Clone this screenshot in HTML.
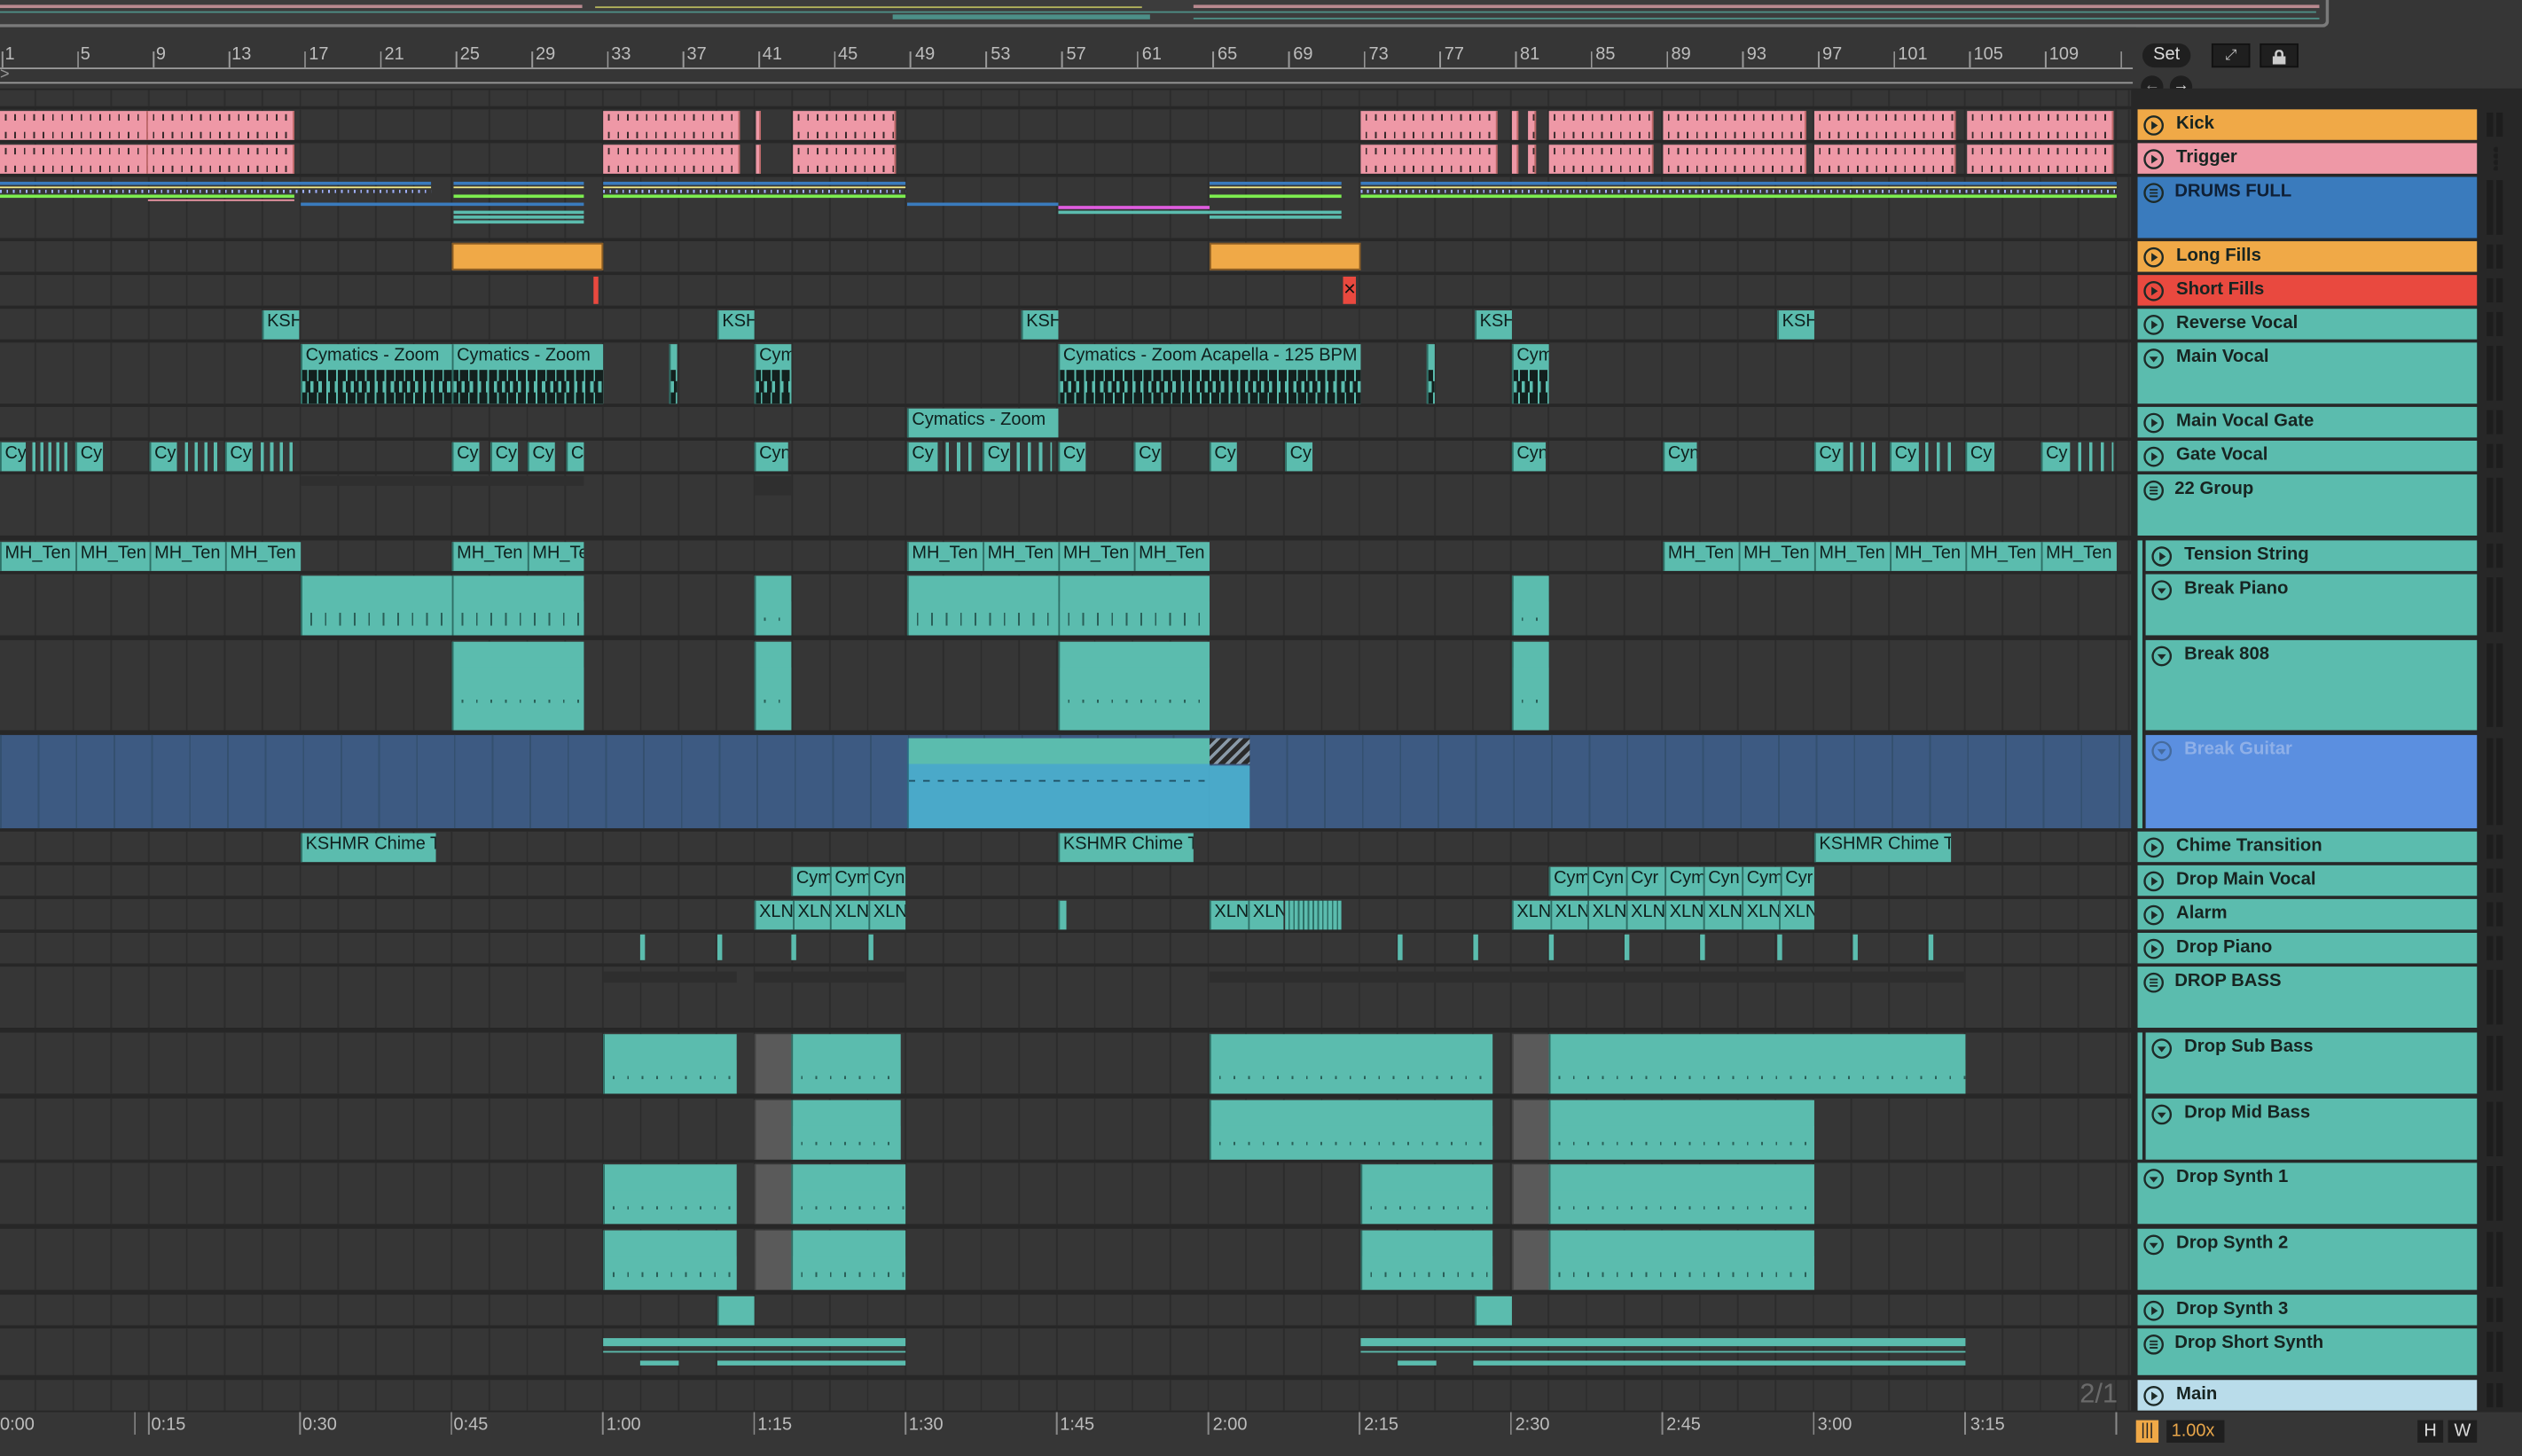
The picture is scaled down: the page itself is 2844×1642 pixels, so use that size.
<!DOCTYPE html>
<html><head><meta charset="utf-8"><style>
html,body{margin:0;padding:0;background:#363636;overflow:hidden}
body{width:2844px;height:1642px;position:relative}
#w{position:absolute;left:0;top:0;width:1568px;height:905.3px;transform:scale(1.81378);transform-origin:0 0;font-family:"Liberation Sans",sans-serif;background:#363636;overflow:hidden}
.a{position:absolute}
.row{position:absolute;left:0;width:1325px;background:#363636 repeating-linear-gradient(90deg,#2c2c2c 0 1px,transparent 1px 23.52px);background-position:-2px 0}
.c{position:absolute;background:#5bbcae;box-sizing:border-box;border-left:1px solid #2e6f66;overflow:hidden;white-space:nowrap;font-size:11px;color:#0f1f1d;line-height:15px;padding-left:2px}
.pk{position:absolute;background:#ee98a6;background-image:repeating-linear-gradient(90deg,#3a2a2c 0 1px,transparent 1px 5.88px),repeating-linear-gradient(90deg,#3a2a2c 0 1px,transparent 1px 5.88px);background-size:100% 4px,100% 4px;background-position:3px 2px,3px 13px;background-repeat:no-repeat;box-sizing:border-box;border-right:1px solid #b66}
.wv{position:absolute;left:0;right:0;top:16px;bottom:0;background:repeating-linear-gradient(90deg,#13201e 0 3px,#5bbcae 3px 4px,#13201e 4px 6px);}
.wv:after{content:"";position:absolute;left:0;right:0;top:35%;height:30%;background:repeating-linear-gradient(90deg,#5bbcae 0 2px,#13201e 2px 5px)}
.md{position:absolute;left:0;right:0;top:16px;bottom:0;background:#5bbcae repeating-linear-gradient(90deg,transparent 0 5px,#2a5f58 5px 6px,transparent 6px 9px);background-size:100% 2px;background-repeat:no-repeat;background-position:0 55%}
.h{position:absolute;left:1329px;width:211px;box-sizing:border-box;font-size:11.2px;font-weight:bold;color:#172421;padding-left:24px;line-height:19px}
.h svg{position:absolute;left:3px;top:3px}
.m{position:absolute;left:1546px;width:10px;background:linear-gradient(90deg,#1d1d1d 0 4px,transparent 4px 6px,#1d1d1d 6px 10px)}
.t{font-size:11px;color:#bdbdbd;position:absolute;top:28px}
.bt{font-size:11px;color:#bdbdbd;position:absolute;top:880px}
.ln{position:absolute;height:2px}
.gy{position:absolute;background:#5a5a5a;box-sizing:border-box;border-left:1px solid #444}
</style></head><body><div id="w">
<div class="a" style="left:0;top:0;width:1446px;height:15px;background:#3c3c3c;border-bottom:2px solid #7a7a7a;border-right:2px solid #7a7a7a;border-radius:0 0 4px 0"></div>
<div class="a" style="left:0;top:3px;width:362px;height:2px;background:#b9898f"></div>
<div class="a" style="left:0;top:7px;width:1440px;height:1px;background:#4f8f87"></div>
<div class="a" style="left:370px;top:4px;width:340px;height:1px;background:#b5b55c"></div>
<div class="a" style="left:555px;top:9px;width:160px;height:3px;background:#4c8f88"></div>
<div class="a" style="left:742px;top:3px;width:700px;height:2px;background:#b9898f"></div>
<div class="a" style="left:742px;top:11px;width:700px;height:1px;background:#4f8f87"></div>
<div class="a" style="left:0;top:17px;width:1328px;height:38px;background:#363636"></div>
<div class="a" style="left:0;top:42px;width:1326px;height:1px;background:#9a9a9a"></div>
<div class="a" style="left:0;top:51px;width:1326px;height:1px;background:#9a9a9a"></div>
<div class="a" style="left:0;top:43px;color:#999;font-size:10px;line-height:8px">&gt;</div>
<div class="a" style="left:0;top:32px;width:1326px;height:10px;background:repeating-linear-gradient(90deg,#999 0 1px,transparent 1px 47.05px);background-position:1px 0"></div>
<div class="t" style="left:3px">1</div><div class="t" style="left:50px">5</div><div class="t" style="left:97px">9</div><div class="t" style="left:144px">13</div><div class="t" style="left:192px">17</div><div class="t" style="left:239px">21</div><div class="t" style="left:286px">25</div><div class="t" style="left:333px">29</div><div class="t" style="left:380px">33</div><div class="t" style="left:427px">37</div><div class="t" style="left:474px">41</div><div class="t" style="left:521px">45</div><div class="t" style="left:569px">49</div><div class="t" style="left:616px">53</div><div class="t" style="left:663px">57</div><div class="t" style="left:710px">61</div><div class="t" style="left:757px">65</div><div class="t" style="left:804px">69</div><div class="t" style="left:851px">73</div><div class="t" style="left:898px">77</div><div class="t" style="left:945px">81</div><div class="t" style="left:992px">85</div><div class="t" style="left:1039px">89</div><div class="t" style="left:1086px">93</div><div class="t" style="left:1133px">97</div><div class="t" style="left:1180px">101</div><div class="t" style="left:1227px">105</div><div class="t" style="left:1274px">109</div>
<div class="a" style="left:1332px;top:27px;width:30px;height:15px;border-radius:8px;background:#1f1f1f;color:#ddd;font-size:11px;text-align:center;line-height:15px">Set</div>
<div class="a" style="left:1375px;top:27px;width:22px;height:13px;background:#1f1f1f;border:1px solid #111;color:#ccc;font-size:9px;text-align:center;line-height:13px">⤢</div>
<div class="a" style="left:1405px;top:27px;width:22px;height:13px;background:#1f1f1f;border:1px solid #111;text-align:center"><svg width="10" height="10" viewBox="0 0 10 10" style="margin-top:2px"><rect x="1" y="4" width="8" height="5" fill="#ccc"/><path d="M3 4V2.5a2 2 0 0 1 4 0V4" stroke="#ccc" fill="none" stroke-width="1.4"/></svg></div>
<div class="a" style="left:1331px;top:47px;width:14px;height:14px;border-radius:7px;background:#1f1f1f;color:#888;font-size:10px;text-align:center;line-height:14px">←</div>
<div class="a" style="left:1349px;top:47px;width:14px;height:14px;border-radius:7px;background:#1f1f1f;color:#ddd;font-size:10px;text-align:center;line-height:14px">→</div>
<div class="a" style="left:1325px;top:55px;width:4px;height:823px;background:#2a2a2a"></div>
<div class="a" style="left:0;top:55px;width:1568px;height:823px;background:#272727"></div>

<div class="row" style="top:56px;height:10px"></div>
<div class="row" style="top:68px;height:19px"></div>
<div class="row" style="top:89px;height:19px"></div>
<div class="row" style="top:110px;height:38px"></div>
<div class="row" style="top:150px;height:19px"></div>
<div class="row" style="top:171px;height:19px"></div>
<div class="row" style="top:192px;height:19px"></div>
<div class="row" style="top:213px;height:38px"></div>
<div class="row" style="top:253px;height:19px"></div>
<div class="row" style="top:274px;height:19px"></div>
<div class="row" style="top:295px;height:38px"></div>
<div class="row" style="top:336px;height:19px"></div>
<div class="row" style="top:357px;height:38px"></div>
<div class="row" style="top:398px;height:56px"></div>
<div class="a" style="top:457px;left:0;width:1325px;height:58px;background:#3d5a82 repeating-linear-gradient(90deg,#34506f 0 1px,transparent 1px 23.52px)"></div>
<div class="row" style="top:517px;height:19px"></div>
<div class="row" style="top:538px;height:19px"></div>
<div class="row" style="top:559px;height:19px"></div>
<div class="row" style="top:580px;height:19px"></div>
<div class="row" style="top:601px;height:38px"></div>
<div class="row" style="top:642px;height:38px"></div>
<div class="row" style="top:683px;height:38px"></div>
<div class="row" style="top:723px;height:38px"></div>
<div class="row" style="top:764px;height:38px"></div>
<div class="row" style="top:805px;height:19px"></div>
<div class="row" style="top:826px;height:29px"></div>
<div class="row" style="top:858px;height:19px"></div>

<div class="pk" style="left:0;top:69px;width:92px;height:18px"></div><div class="pk" style="left:92px;top:69px;width:91px;height:18px"></div>
<div class="pk" style="left:375px;top:69px;width:85px;height:18px"></div><div class="pk" style="left:470px;top:69px;width:3px;height:18px"></div><div class="pk" style="left:493px;top:69px;width:64px;height:18px"></div>
<div class="pk" style="left:846px;top:69px;width:85px;height:18px"></div><div class="pk" style="left:940px;top:69px;width:4px;height:18px"></div><div class="pk" style="left:950px;top:69px;width:5px;height:18px"></div><div class="pk" style="left:963px;top:69px;width:65px;height:18px"></div><div class="pk" style="left:1034px;top:69px;width:89px;height:18px"></div><div class="pk" style="left:1128px;top:69px;width:88px;height:18px"></div><div class="pk" style="left:1223px;top:69px;width:91px;height:18px"></div>
<div class="pk" style="left:0;top:90px;width:92px;height:18px"></div><div class="pk" style="left:92px;top:90px;width:91px;height:18px"></div>
<div class="pk" style="left:375px;top:90px;width:85px;height:18px"></div><div class="pk" style="left:470px;top:90px;width:3px;height:18px"></div><div class="pk" style="left:493px;top:90px;width:64px;height:18px"></div>
<div class="pk" style="left:846px;top:90px;width:85px;height:18px"></div><div class="pk" style="left:940px;top:90px;width:4px;height:18px"></div><div class="pk" style="left:950px;top:90px;width:5px;height:18px"></div><div class="pk" style="left:963px;top:90px;width:65px;height:18px"></div><div class="pk" style="left:1034px;top:90px;width:89px;height:18px"></div><div class="pk" style="left:1128px;top:90px;width:88px;height:18px"></div><div class="pk" style="left:1223px;top:90px;width:91px;height:18px"></div>

<div class="ln" style="left:0;top:113px;width:268px;background:#3a7bbd"></div><div class="ln" style="left:282px;top:113px;width:81px;background:#3a7bbd"></div><div class="ln" style="left:375px;top:113px;width:188px;background:#3a7bbd"></div><div class="ln" style="left:752px;top:113px;width:82px;background:#3a7bbd"></div><div class="ln" style="left:846px;top:113px;width:470px;background:#3a7bbd"></div>
<div class="ln" style="left:0;top:116px;width:268px;height:1px;background:#efe98a"></div><div class="ln" style="left:282px;top:116px;width:81px;height:1px;background:#efe98a"></div><div class="ln" style="left:375px;top:116px;width:188px;height:1px;background:#efe98a"></div><div class="ln" style="left:752px;top:116px;width:82px;height:1px;background:#efe98a"></div><div class="ln" style="left:846px;top:116px;width:470px;height:1px;background:#efe98a"></div>
<div class="ln" style="left:0;top:118px;width:268px;height:2px;background:repeating-linear-gradient(90deg,#9fb0ff 0 1px,transparent 1px 4px)"></div><div class="ln" style="left:375px;top:118px;width:188px;height:2px;background:repeating-linear-gradient(90deg,#9fb0ff 0 1px,transparent 1px 4px)"></div><div class="ln" style="left:846px;top:118px;width:470px;height:2px;background:repeating-linear-gradient(90deg,#9fb0ff 0 1px,transparent 1px 4px)"></div>
<div class="ln" style="left:0;top:121px;width:183px;background:#7ded4f"></div><div class="ln" style="left:282px;top:121px;width:81px;background:#7ded4f"></div><div class="ln" style="left:375px;top:121px;width:188px;background:#7ded4f"></div><div class="ln" style="left:752px;top:121px;width:82px;background:#7ded4f"></div><div class="ln" style="left:846px;top:121px;width:470px;background:#7ded4f"></div>
<div class="ln" style="left:92px;top:124px;width:91px;height:1px;background:#ee98a6"></div>
<div class="ln" style="left:187px;top:126px;width:176px;background:#3a7bbd"></div><div class="ln" style="left:564px;top:126px;width:94px;background:#3a7bbd"></div>
<div class="ln" style="left:658px;top:128px;width:94px;background:#e05ce0"></div><div class="ln" style="left:658px;top:131px;width:94px;background:#5bbcae"></div>
<div class="ln" style="left:282px;top:131px;width:81px;background:#5bbcae"></div><div class="ln" style="left:282px;top:134px;width:81px;background:#5bbcae"></div><div class="ln" style="left:282px;top:137px;width:81px;background:#5bbcae"></div><div class="ln" style="left:752px;top:131px;width:82px;background:#5bbcae"></div><div class="ln" style="left:752px;top:134px;width:82px;background:#5bbcae"></div>

<div class="a" style="left:281px;top:151px;width:94px;height:17px;background:#f0a947;border:1px solid #8a5c23;box-sizing:border-box"></div>
<div class="a" style="left:752px;top:151px;width:94px;height:17px;background:#f0a947;border:1px solid #8a5c23;box-sizing:border-box"></div>
<div class="a" style="left:369px;top:172px;width:3px;height:17px;background:#e9493f"></div>
<div class="a" style="left:835px;top:172px;width:8px;height:17px;background:#e9493f;color:#111;font-size:10px;line-height:17px">✕</div>

<div class="c" style="left:163px;top:193px;width:23px;height:18px">KSH</div><div class="c" style="left:446px;top:193px;width:23px;height:18px">KSH</div><div class="c" style="left:635px;top:193px;width:23px;height:18px">KSH</div><div class="c" style="left:917px;top:193px;width:23px;height:18px">KSH</div><div class="c" style="left:1105px;top:193px;width:23px;height:18px">KSH</div>
<div class="c" style="left:187px;top:214px;width:94px;height:37px">Cymatics - Zoom<div class="wv"></div></div>
<div class="c" style="left:281px;top:214px;width:94px;height:37px">Cymatics - Zoom<div class="wv"></div></div>
<div class="c" style="left:416px;top:214px;width:5px;height:37px"><div class="wv"></div></div>
<div class="c" style="left:469px;top:214px;width:23px;height:37px">Cym<div class="wv"></div></div>
<div class="c" style="left:658px;top:214px;width:188px;height:37px">Cymatics - Zoom Acapella - 125 BPM<div class="wv"></div></div>
<div class="c" style="left:887px;top:214px;width:5px;height:37px"><div class="wv"></div></div>
<div class="c" style="left:940px;top:214px;width:23px;height:37px">Cym<div class="wv"></div></div>
<div class="c" style="left:564px;top:254px;width:94px;height:18px">Cymatics - Zoom</div>
<div class="c" style="left:0;top:275px;width:16px;height:18px">Cy</div><div class="c" style="left:47px;top:275px;width:17px;height:18px">Cy</div><div class="c" style="left:93px;top:275px;width:17px;height:18px">Cy</div><div class="c" style="left:140px;top:275px;width:17px;height:18px">Cy</div>
<div class="c" style="left:281px;top:275px;width:17px;height:18px">Cy</div><div class="c" style="left:305px;top:275px;width:17px;height:18px">Cy</div><div class="c" style="left:328px;top:275px;width:17px;height:18px">Cy</div><div class="c" style="left:352px;top:275px;width:11px;height:18px">C</div>
<div class="c" style="left:469px;top:275px;width:21px;height:18px">Cyn</div><div class="c" style="left:564px;top:275px;width:19px;height:18px">Cy</div><div class="c" style="left:611px;top:275px;width:17px;height:18px">Cy</div><div class="c" style="left:658px;top:275px;width:17px;height:18px">Cy</div><div class="c" style="left:705px;top:275px;width:17px;height:18px">Cy</div><div class="c" style="left:752px;top:275px;width:17px;height:18px">Cy</div><div class="c" style="left:799px;top:275px;width:17px;height:18px">Cy</div>
<div class="c" style="left:940px;top:275px;width:21px;height:18px">Cyn</div><div class="c" style="left:1034px;top:275px;width:21px;height:18px">Cyn</div><div class="c" style="left:1128px;top:275px;width:18px;height:18px">Cy</div><div class="c" style="left:1175px;top:275px;width:18px;height:18px">Cy</div><div class="c" style="left:1222px;top:275px;width:18px;height:18px">Cy</div><div class="c" style="left:1269px;top:275px;width:18px;height:18px">Cy</div>
<div class="a" style="left:20px;top:275px;width:22px;height:18px;background:repeating-linear-gradient(90deg,#5bbcae 0 2px,transparent 2px 5px)"></div><div class="a" style="left:115px;top:275px;width:22px;height:18px;background:repeating-linear-gradient(90deg,#5bbcae 0 2px,transparent 2px 6px)"></div><div class="a" style="left:162px;top:275px;width:20px;height:18px;background:repeating-linear-gradient(90deg,#5bbcae 0 2px,transparent 2px 6px)"></div><div class="a" style="left:588px;top:275px;width:20px;height:18px;background:repeating-linear-gradient(90deg,#5bbcae 0 2px,transparent 2px 7px)"></div><div class="a" style="left:632px;top:275px;width:22px;height:18px;background:repeating-linear-gradient(90deg,#5bbcae 0 2px,transparent 2px 7px)"></div><div class="a" style="left:1150px;top:275px;width:20px;height:18px;background:repeating-linear-gradient(90deg,#5bbcae 0 2px,transparent 2px 7px)"></div><div class="a" style="left:1197px;top:275px;width:20px;height:18px;background:repeating-linear-gradient(90deg,#5bbcae 0 2px,transparent 2px 7px)"></div><div class="a" style="left:1292px;top:275px;width:22px;height:18px;background:repeating-linear-gradient(90deg,#5bbcae 0 2px,transparent 2px 7px)"></div>
<div class="c" style="left:0;top:337px;width:47px;height:18px">MH_Ten</div><div class="c" style="left:47px;top:337px;width:46px;height:18px">MH_Ten</div><div class="c" style="left:93px;top:337px;width:47px;height:18px">MH_Ten</div><div class="c" style="left:140px;top:337px;width:47px;height:18px">MH_Ten</div>
<div class="c" style="left:281px;top:337px;width:47px;height:18px">MH_Ten</div><div class="c" style="left:328px;top:337px;width:35px;height:18px">MH_Te</div>
<div class="c" style="left:564px;top:337px;width:47px;height:18px">MH_Ten</div><div class="c" style="left:611px;top:337px;width:47px;height:18px">MH_Ten</div><div class="c" style="left:658px;top:337px;width:47px;height:18px">MH_Ten</div><div class="c" style="left:705px;top:337px;width:47px;height:18px">MH_Ten</div>
<div class="c" style="left:1034px;top:337px;width:47px;height:18px">MH_Ten</div><div class="c" style="left:1081px;top:337px;width:47px;height:18px">MH_Ten</div><div class="c" style="left:1128px;top:337px;width:47px;height:18px">MH_Ten</div><div class="c" style="left:1175px;top:337px;width:47px;height:18px">MH_Ten</div><div class="c" style="left:1222px;top:337px;width:47px;height:18px">MH_Ten</div><div class="c" style="left:1269px;top:337px;width:47px;height:18px">MH_Ten</div>
<div class="c" style="left:187px;top:358px;width:94px;height:37px"><div class="md" style="background-size:100% 8px"></div></div><div class="c" style="left:281px;top:358px;width:82px;height:37px"><div class="md" style="background-size:100% 8px"></div></div>
<div class="c" style="left:469px;top:358px;width:23px;height:37px"><div class="md"></div></div>
<div class="c" style="left:564px;top:358px;width:94px;height:37px"><div class="md" style="background-size:100% 8px"></div></div><div class="c" style="left:658px;top:358px;width:94px;height:37px"><div class="md" style="background-size:100% 8px"></div></div>
<div class="c" style="left:940px;top:358px;width:23px;height:37px"><div class="md"></div></div>
<div class="c" style="left:281px;top:399px;width:82px;height:55px"><div class="md"></div></div>
<div class="c" style="left:469px;top:399px;width:23px;height:55px"><div class="md"></div></div>
<div class="c" style="left:658px;top:399px;width:94px;height:55px"><div class="md"></div></div>
<div class="c" style="left:940px;top:399px;width:23px;height:55px"><div class="md"></div></div>
<div class="c" style="left:564px;top:459px;width:188px;height:56px;background:#4aa9c9;border-left:1px solid #2b6c82"><div class="a" style="left:0;right:0;top:0;height:16px;background:#5bbcae"></div><div class="a" style="left:0;right:0;top:26px;height:1px;background:repeating-linear-gradient(90deg,#1d4f63 0 4px,transparent 4px 9px)"></div></div>
<div class="a" style="left:752px;top:459px;width:25px;height:16px;background:repeating-linear-gradient(135deg,#2a2a2a 0 3px,#8a9aa8 3px 5px)"></div>
<div class="a" style="left:752px;top:476px;width:25px;height:39px;background:#4aa9c9"></div>
<div class="c" style="left:187px;top:518px;width:84px;height:18px">KSHMR Chime T</div><div class="c" style="left:658px;top:518px;width:84px;height:18px">KSHMR Chime T</div><div class="c" style="left:1128px;top:518px;width:85px;height:18px">KSHMR Chime T</div>
<div class="c" style="left:492px;top:539px;width:24px;height:18px">Cym</div><div class="c" style="left:516px;top:539px;width:24px;height:18px">Cym</div><div class="c" style="left:540px;top:539px;width:23px;height:18px">Cyn</div>
<div class="c" style="left:963px;top:539px;width:24px;height:18px">Cym</div><div class="c" style="left:987px;top:539px;width:24px;height:18px">Cyn</div><div class="c" style="left:1011px;top:539px;width:24px;height:18px">Cyr</div><div class="c" style="left:1035px;top:539px;width:24px;height:18px">Cym</div><div class="c" style="left:1059px;top:539px;width:24px;height:18px">Cyn</div><div class="c" style="left:1083px;top:539px;width:24px;height:18px">Cym</div><div class="c" style="left:1107px;top:539px;width:21px;height:18px">Cyr</div>
<div class="c" style="left:469px;top:560px;width:24px;height:18px">XLN</div><div class="c" style="left:493px;top:560px;width:23px;height:18px">XLN</div><div class="c" style="left:516px;top:560px;width:24px;height:18px">XLN</div><div class="c" style="left:540px;top:560px;width:23px;height:18px">XLN</div>
<div class="c" style="left:658px;top:560px;width:5px;height:18px"></div>
<div class="c" style="left:752px;top:560px;width:24px;height:18px">XLN</div><div class="c" style="left:776px;top:560px;width:22px;height:18px">XLN</div><div class="a" style="left:799px;top:560px;width:35px;height:18px;background:repeating-linear-gradient(90deg,#5bbcae 0 2px,#2d6f66 2px 3px)"></div>
<div class="c" style="left:940px;top:560px;width:24px;height:18px">XLN</div><div class="c" style="left:964px;top:560px;width:23px;height:18px">XLN</div><div class="c" style="left:987px;top:560px;width:24px;height:18px">XLN</div><div class="c" style="left:1011px;top:560px;width:24px;height:18px">XLN</div><div class="c" style="left:1035px;top:560px;width:24px;height:18px">XLN</div><div class="c" style="left:1059px;top:560px;width:24px;height:18px">XLN</div><div class="c" style="left:1083px;top:560px;width:23px;height:18px">XLN</div><div class="c" style="left:1106px;top:560px;width:22px;height:18px">XLN</div>
<div class="a" style="left:398px;top:581px;width:3px;height:16px;background:#5bbcae"></div><div class="a" style="left:446px;top:581px;width:3px;height:16px;background:#5bbcae"></div><div class="a" style="left:492px;top:581px;width:3px;height:16px;background:#5bbcae"></div><div class="a" style="left:540px;top:581px;width:3px;height:16px;background:#5bbcae"></div><div class="a" style="left:869px;top:581px;width:3px;height:16px;background:#5bbcae"></div><div class="a" style="left:916px;top:581px;width:3px;height:16px;background:#5bbcae"></div><div class="a" style="left:963px;top:581px;width:3px;height:16px;background:#5bbcae"></div><div class="a" style="left:1010px;top:581px;width:3px;height:16px;background:#5bbcae"></div><div class="a" style="left:1057px;top:581px;width:3px;height:16px;background:#5bbcae"></div><div class="a" style="left:1105px;top:581px;width:3px;height:16px;background:#5bbcae"></div><div class="a" style="left:1152px;top:581px;width:3px;height:16px;background:#5bbcae"></div><div class="a" style="left:1199px;top:581px;width:3px;height:16px;background:#5bbcae"></div>
<div class="a" style="left:375px;top:604px;width:83px;height:7px;background:#2e2e2e"></div><div class="a" style="left:469px;top:604px;width:94px;height:7px;background:#2e2e2e"></div><div class="a" style="left:752px;top:604px;width:470px;height:7px;background:#2e2e2e"></div>
<div class="a" style="left:187px;top:296px;width:176px;height:6px;background:#2f2f2f"></div><div class="a" style="left:469px;top:296px;width:23px;height:12px;background:#2f2f2f"></div>
<div class="c" style="left:375px;top:643px;width:83px;height:37px"><div class="md"></div></div><div class="gy" style="left:469px;top:643px;width:23px;height:37px"></div><div class="c" style="left:492px;top:643px;width:68px;height:37px"><div class="md"></div></div>
<div class="c" style="left:752px;top:643px;width:176px;height:37px"><div class="md"></div></div><div class="gy" style="left:940px;top:643px;width:23px;height:37px"></div><div class="c" style="left:963px;top:643px;width:259px;height:37px"><div class="md"></div></div>
<div class="gy" style="left:469px;top:684px;width:23px;height:37px"></div><div class="c" style="left:492px;top:684px;width:68px;height:37px"><div class="md"></div></div>
<div class="c" style="left:752px;top:684px;width:176px;height:37px"><div class="md"></div></div><div class="gy" style="left:940px;top:684px;width:23px;height:37px"></div><div class="c" style="left:963px;top:684px;width:165px;height:37px"><div class="md"></div></div>
<div class="c" style="left:375px;top:724px;width:83px;height:37px"><div class="md"></div></div><div class="gy" style="left:469px;top:724px;width:23px;height:37px"></div><div class="c" style="left:492px;top:724px;width:71px;height:37px"><div class="md"></div></div>
<div class="c" style="left:846px;top:724px;width:82px;height:37px"><div class="md"></div></div><div class="gy" style="left:940px;top:724px;width:23px;height:37px"></div><div class="c" style="left:963px;top:724px;width:165px;height:37px"><div class="md"></div></div>
<div class="c" style="left:375px;top:765px;width:83px;height:37px"><div class="md" style="background-size:100% 3px"></div></div><div class="gy" style="left:469px;top:765px;width:23px;height:37px"></div><div class="c" style="left:492px;top:765px;width:71px;height:37px"><div class="md" style="background-size:100% 3px"></div></div>
<div class="c" style="left:846px;top:765px;width:82px;height:37px"><div class="md" style="background-size:100% 3px"></div></div><div class="gy" style="left:940px;top:765px;width:23px;height:37px"></div><div class="c" style="left:963px;top:765px;width:165px;height:37px"><div class="md" style="background-size:100% 3px"></div></div>
<div class="c" style="left:446px;top:806px;width:23px;height:18px"></div><div class="c" style="left:917px;top:806px;width:23px;height:18px"></div>
<div class="ln" style="left:375px;top:832px;width:188px;height:5px;background:#5bbcae"></div><div class="ln" style="left:846px;top:832px;width:376px;height:5px;background:#5bbcae"></div>
<div class="ln" style="left:375px;top:840px;width:188px;height:1px;background:#5bbcae"></div><div class="ln" style="left:846px;top:840px;width:376px;height:1px;background:#5bbcae"></div>
<div class="ln" style="left:398px;top:846px;width:24px;height:3px;background:#5bbcae"></div><div class="ln" style="left:446px;top:846px;width:117px;height:3px;background:#5bbcae"></div><div class="ln" style="left:869px;top:846px;width:24px;height:3px;background:#5bbcae"></div><div class="ln" style="left:916px;top:846px;width:306px;height:3px;background:#5bbcae"></div>

<svg width="0" height="0" style="position:absolute"><defs>
<g id="pl"><circle cx="7" cy="7" r="5.6" fill="none" stroke="#1d2a27" stroke-width="1.3"/><path d="M5.6 4.3L9.6 7 5.6 9.7Z" fill="#1d2a27"/></g>
<g id="dn"><circle cx="7" cy="7" r="5.6" fill="none" stroke="#1d2a27" stroke-width="1.3"/><path d="M4.3 5.8L9.7 5.8 7 9.2Z" fill="#1d2a27"/></g>
<g id="gr"><circle cx="7" cy="7" r="5.6" fill="none" stroke="#1d2a27" stroke-width="1.3"/><path d="M4.5 5h5M4.5 7h5M4.5 9h5" stroke="#1d2a27" stroke-width="1"/></g>
</defs></svg>
<div class="h" style="top:68px;height:19px;background:#f0a947"><svg width="14" height="14"><use href="#pl"/></svg>Kick</div>
<div class="h" style="top:89px;height:19px;background:#ee98a6"><svg width="14" height="14"><use href="#pl"/></svg>Trigger</div>
<div class="h" style="top:110px;height:38px;background:#3a7bbd;color:#0f2036;padding-left:23px"><svg width="14" height="14"><use href="#gr"/></svg>DRUMS FULL</div>
<div class="h" style="top:150px;height:19px;background:#f0a947"><svg width="14" height="14"><use href="#pl"/></svg>Long Fills</div>
<div class="h" style="top:171px;height:19px;background:#e9493f"><svg width="14" height="14"><use href="#pl"/></svg>Short Fills</div>
<div class="h" style="top:192px;height:19px;background:#5bbcae"><svg width="14" height="14"><use href="#pl"/></svg>Reverse Vocal</div>
<div class="h" style="top:213px;height:38px;background:#5bbcae"><svg width="14" height="14"><use href="#dn"/></svg>Main Vocal</div>
<div class="h" style="top:253px;height:19px;background:#5bbcae"><svg width="14" height="14"><use href="#pl"/></svg>Main Vocal Gate</div>
<div class="h" style="top:274px;height:19px;background:#5bbcae"><svg width="14" height="14"><use href="#pl"/></svg>Gate Vocal</div>
<div class="h" style="top:295px;height:38px;background:#5bbcae;padding-left:23px"><svg width="14" height="14"><use href="#gr"/></svg>22 Group</div>
<div class="a" style="left:1329px;top:336px;width:3px;height:179px;background:#5bbcae"></div>
<div class="h" style="left:1334px;width:206px;top:336px;height:19px;background:#5bbcae"><svg width="14" height="14"><use href="#pl"/></svg>Tension String</div>
<div class="h" style="left:1334px;width:206px;top:357px;height:38px;background:#5bbcae"><svg width="14" height="14"><use href="#dn"/></svg>Break Piano</div>
<div class="h" style="left:1334px;width:206px;top:398px;height:56px;background:#5bbcae"><svg width="14" height="14"><use href="#dn"/></svg>Break 808</div>
<div class="h" style="left:1334px;width:206px;top:457px;height:58px;background:#5b8fe0;color:#8fb0e8"><svg width="14" height="14" style="opacity:.35"><use href="#dn"/></svg>Break Guitar</div>
<div class="h" style="top:517px;height:19px;background:#5bbcae"><svg width="14" height="14"><use href="#pl"/></svg>Chime Transition</div>
<div class="h" style="top:538px;height:19px;background:#5bbcae"><svg width="14" height="14"><use href="#pl"/></svg>Drop Main Vocal</div>
<div class="h" style="top:559px;height:19px;background:#5bbcae"><svg width="14" height="14"><use href="#pl"/></svg>Alarm</div>
<div class="h" style="top:580px;height:19px;background:#5bbcae"><svg width="14" height="14"><use href="#pl"/></svg>Drop Piano</div>
<div class="h" style="top:601px;height:38px;background:#5bbcae;padding-left:23px"><svg width="14" height="14"><use href="#gr"/></svg>DROP BASS</div>
<div class="a" style="left:1329px;top:642px;width:3px;height:79px;background:#5bbcae"></div>
<div class="h" style="left:1334px;width:206px;top:642px;height:38px;background:#5bbcae"><svg width="14" height="14"><use href="#dn"/></svg>Drop Sub Bass</div>
<div class="h" style="left:1334px;width:206px;top:683px;height:38px;background:#5bbcae"><svg width="14" height="14"><use href="#dn"/></svg>Drop Mid Bass</div>
<div class="h" style="top:723px;height:38px;background:#5bbcae"><svg width="14" height="14"><use href="#dn"/></svg>Drop Synth 1</div>
<div class="h" style="top:764px;height:38px;background:#5bbcae"><svg width="14" height="14"><use href="#dn"/></svg>Drop Synth 2</div>
<div class="h" style="top:805px;height:19px;background:#5bbcae"><svg width="14" height="14"><use href="#pl"/></svg>Drop Synth 3</div>
<div class="h" style="top:826px;height:29px;background:#5bbcae;padding-left:23px"><svg width="14" height="14"><use href="#gr"/></svg>Drop Short Synth</div>
<div class="h" style="top:858px;height:19px;background:#b9dcea"><svg width="14" height="14"><use href="#pl"/></svg>Main</div>
<div class="m" style="top:70px;height:15px"></div><div class="m" style="top:91px;height:15px;background:radial-gradient(circle,#1d1d1d 1.5px,transparent 2px) 0 0/10px 4px repeat-y;width:6px;left:1547px"></div><div class="m" style="top:112px;height:34px"></div><div class="m" style="top:152px;height:15px"></div><div class="m" style="top:173px;height:15px"></div><div class="m" style="top:194px;height:15px"></div><div class="m" style="top:215px;height:34px"></div><div class="m" style="top:255px;height:15px"></div><div class="m" style="top:276px;height:15px"></div><div class="m" style="top:297px;height:34px"></div><div class="m" style="top:338px;height:15px"></div><div class="m" style="top:359px;height:34px"></div><div class="m" style="top:400px;height:52px"></div><div class="m" style="top:459px;height:54px"></div><div class="m" style="top:519px;height:15px"></div><div class="m" style="top:540px;height:15px"></div><div class="m" style="top:561px;height:15px"></div><div class="m" style="top:582px;height:15px"></div><div class="m" style="top:603px;height:34px"></div><div class="m" style="top:644px;height:34px"></div><div class="m" style="top:685px;height:34px"></div><div class="m" style="top:725px;height:34px"></div><div class="m" style="top:766px;height:34px"></div><div class="m" style="top:807px;height:15px"></div><div class="m" style="top:828px;height:25px"></div><div class="m" style="top:860px;height:15px"></div>
<div class="a" style="left:1293px;top:857px;font-size:17px;color:#6a6a6a">2/1</div>
<div class="a" style="left:0;top:878px;width:1568px;height:27px;background:#363636"></div>
<div class="a" style="left:0;top:878px;width:1326px;height:14px;background:repeating-linear-gradient(90deg,#8a8a8a 0 1px,transparent 1px 94.1px);background-position:92px 0"></div>
<div class="bt" style="left:0">0:00</div><div class="bt" style="left:94px">0:15</div><div class="bt" style="left:188px">0:30</div><div class="bt" style="left:282px">0:45</div><div class="bt" style="left:377px">1:00</div><div class="bt" style="left:471px">1:15</div><div class="bt" style="left:565px">1:30</div><div class="bt" style="left:659px">1:45</div><div class="bt" style="left:754px">2:00</div><div class="bt" style="left:848px">2:15</div><div class="bt" style="left:942px">2:30</div><div class="bt" style="left:1036px">2:45</div><div class="bt" style="left:1130px">3:00</div><div class="bt" style="left:1225px">3:15</div>
<div class="a" style="left:1328px;top:883px;width:14px;height:14px;background:#f0a947;color:#222;font-size:10px;text-align:center;line-height:14px">|||</div>
<div class="a" style="left:1347px;top:883px;width:36px;height:14px;background:#1f1f1f;color:#e8a64a;font-size:11px;line-height:14px;padding-left:3px;box-sizing:border-box">1.00x</div>
<div class="a" style="left:1503px;top:883px;width:16px;height:14px;background:#1f1f1f;color:#ddd;font-size:11px;text-align:center;line-height:14px">H</div>
<div class="a" style="left:1522px;top:883px;width:18px;height:14px;background:#1f1f1f;color:#ddd;font-size:11px;text-align:center;line-height:14px">W</div>
</div></body></html>
